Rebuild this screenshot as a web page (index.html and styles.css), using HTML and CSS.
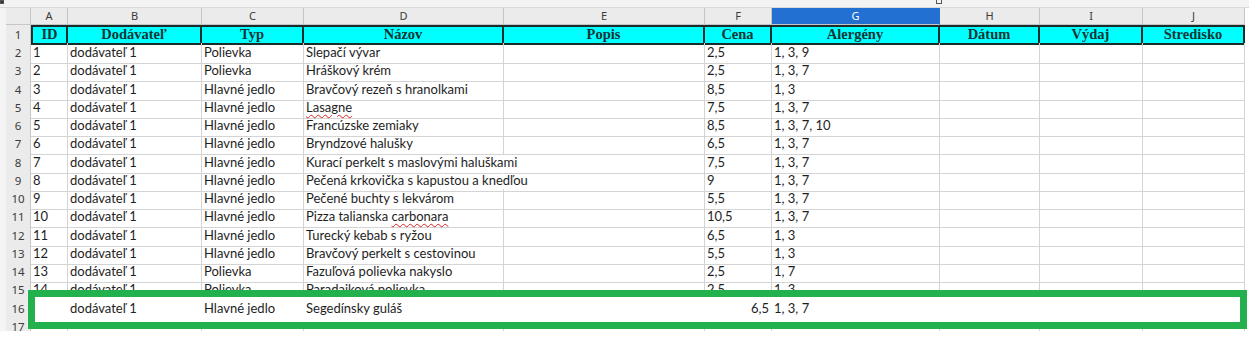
FILE: index.html
```html
<!DOCTYPE html>
<html lang="sk">
<head>
    <meta charset="UTF-8">
    <title>Jedálny lístok - hárok</title>
    <link rel="stylesheet" href="styles.css">
</head>
<body>
    <div class="topbar">
        <span class="mark mark-left"></span>
        <span class="mark mark-handle"></span>
    </div>

    <div class="sheet">
        <div class="row colhead">
            <div class="corner"></div>
            <div>A</div><div>B</div><div>C</div><div>D</div><div>E</div>
            <div>F</div><div class="selected">G</div><div>H</div><div>I</div><div>J</div>
        </div>

        <div class="row titles">
            <div class="rh">1</div>
            <div>ID</div><div>Dodávateľ</div><div>Typ</div><div>Názov</div><div>Popis</div>
            <div>Cena</div><div>Alergény</div><div>Dátum</div><div>Výdaj</div><div>Stredisko</div>
        </div>

        <div id="rows"></div>

        <div class="highlight"></div>
    </div>

<script>
// riadky hárku: id, typ, názov, cena, alergény
const ROWS = [
    ['1', 'Polievka', 'Slepačí vývar', '2,5', '1, 3, 9'],
    ['2', 'Polievka', 'Hráškový krém', '2,5', '1, 3, 7'],
    ['3', 'Hlavné jedlo', 'Bravčový rezeň s hranolkami', '8,5', '1, 3'],
    ['4', 'Hlavné jedlo', '<u class="typo">Lasagne</u>', '7,5', '1, 3, 7'],
    ['5', 'Hlavné jedlo', 'Francúzske zemiaky', '8,5', '1, 3, 7, 10'],
    ['6', 'Hlavné jedlo', 'Bryndzové halušky', '6,5', '1, 3, 7'],
    ['7', 'Hlavné jedlo', 'Kurací perkelt s maslovými haluškami', '7,5', '1, 3, 7', true],
    ['8', 'Hlavné jedlo', 'Pečená krkovička s kapustou a knedľou', '9', '1, 3, 7', true],
    ['9', 'Hlavné jedlo', 'Pečené buchty s lekvárom', '5,5', '1, 3, 7'],
    ['10', 'Hlavné jedlo', 'Pizza talianska <u class="typo">carbonara</u>', '10,5', '1, 3, 7'],
    ['11', 'Hlavné jedlo', 'Turecký kebab s ryžou', '6,5', '1, 3'],
    ['12', 'Hlavné jedlo', 'Bravčový perkelt s cestovinou', '5,5', '1, 3'],
    ['13', 'Polievka', 'Fazuľová polievka nakyslo', '2,5', '1, 7'],
    ['14', 'Polievka', 'Paradajková polievka', '2,5', '1, 3']
];

function rowHtml(num, cells, cls) {
    return `<div class="row data ${cls || ''}">
        <div class="rh">${num}</div>
        ${cells.map(c => `<div class="${c[1] || ''}">${c[0]}</div>`).join('')}
    </div>`;
}

const list = document.getElementById('rows');
let html = '';
ROWS.forEach((r, i) => {
    html += rowHtml(i + 2, [
        [r[0]], ['dodávateľ 1'], [r[1]], [r[2], r[5] ? 'spill' : ''], [''],
        [r[3]], [r[4]], [''], [''], ['']
    ]);
});
html += rowHtml(16, [
    [''], ['dodávateľ 1'], ['Hlavné jedlo'], ['Segedínsky guláš'], [''],
    ['6,5', 'num'], ['1, 3, 7'], [''], [''], ['']
], 'pasted');
html += rowHtml(17, [[''], [''], [''], [''], [''], [''], [''], [''], [''], ['']], 'last');
list.innerHTML = html;
</script>
</body>
</html>
```

FILE: styles.css
```css
:root {
    --cols: 25px 37px 134px 102px 200px 201px 67px 168px 100px 103px 102px;
    --grid: #d4d4d4;
    --head-bg: #ebebeb;
    --head-line: #c6c6c6;
    --title-bg: #00ffff;
    --title-line: #1b2c2c;
    --select: #2370d3;
    --mark: #22b14c;
}

body {
    margin: 0;
    background: #ffffff;
    font-family: 'Lato', 'Noto Sans', sans-serif;
    color: #1e1e1e;
    overflow: hidden;
}

.topbar {
    height: 7px;
    background: #f3f3f3;
    border-bottom: 1px solid #d9d9d9;
    position: relative;
}

.mark {
    position: absolute;
    top: 0;
    border: 1px solid #555;
}

.mark-left {
    left: 0;
    width: 2px;
    height: 2px;
    background: #333;
}

.mark-handle {
    left: 936px;
    width: 4px;
    height: 3px;
    border-top: none;
}

.sheet {
    position: relative;
    padding-left: 6px;
    background: linear-gradient(to right, #f4f4f4 6px, transparent 6px);
    height: 323px;
    overflow: hidden;
}

.row {
    display: grid;
    grid-template-columns: var(--cols);
}

.row > div {
    box-sizing: border-box;
    white-space: nowrap;
    overflow: visible;
}

/* column letters */
.colhead {
    height: 17px;
}

.colhead > div {
    background: var(--head-bg);
    border-right: 1px solid var(--head-line);
    border-bottom: 1px solid var(--head-line);
    font-family: 'Noto Sans', sans-serif;
    font-size: 11px;
    line-height: 16px;
    text-align: center;
    color: #3a3a3a;
}

.colhead > div.selected {
    background: var(--select);
    color: #ffffff;
    border-right-color: var(--select);
}

.rh {
    background: var(--head-bg);
    border-right: 1px solid var(--head-line);
    border-bottom: 1px solid #d2d2d2;
    font-family: 'Noto Sans', sans-serif;
    font-size: 11.5px;
    color: #3a3a3a;
    text-align: center;
}

/* header row with cyan fill */
.titles {
    height: 18px;
}

.titles > div:not(.rh) {
    background: var(--title-bg);
    border-top: 2px solid var(--title-line);
    border-bottom: 2px solid var(--title-line);
    border-right: 2px solid var(--title-line);
    font-family: 'Liberation Serif', 'DejaVu Serif', serif;
    font-weight: bold;
    font-size: 14.5px;
    line-height: 15px;
    text-align: center;
    color: #153535;
}

.titles > div:nth-child(2) {
    border-left: 2px solid var(--title-line);
}

.titles .rh {
    line-height: 19px;
}

.data {
    height: 18.25px;
}

.data > div {
    font-size: 13px;
    line-height: 18px;
    padding-left: 2px;
}

.data > div:not(.rh) {
    border-right: 1px solid var(--grid);
    border-bottom: 1px solid var(--grid);
}

.data .rh {
    padding-left: 0;
    font-size: 11.5px;
    line-height: 20px;
}

.data > div.spill {
    border-right-color: transparent;
    position: relative;
    z-index: 1;
}

.data > div.num {
    text-align: right;
    padding-right: 2px;
    padding-left: 0;
}

.typo {
    text-decoration: underline wavy #e02020;
    text-decoration-thickness: 1px;
    text-underline-offset: 2px;
}

/* pasted row sits inside the green frame */
.pasted > div:not(.rh) {
    border-color: transparent;
    position: relative;
    z-index: 3;
}

.last .rh {
    border-bottom: none;
}

.highlight {
    position: absolute;
    left: 28px;
    top: 282px;
    width: 1219px;
    height: 39px;
    box-sizing: border-box;
    border: 7px solid var(--mark);
    background: #ffffff;
    z-index: 2;
}
```
